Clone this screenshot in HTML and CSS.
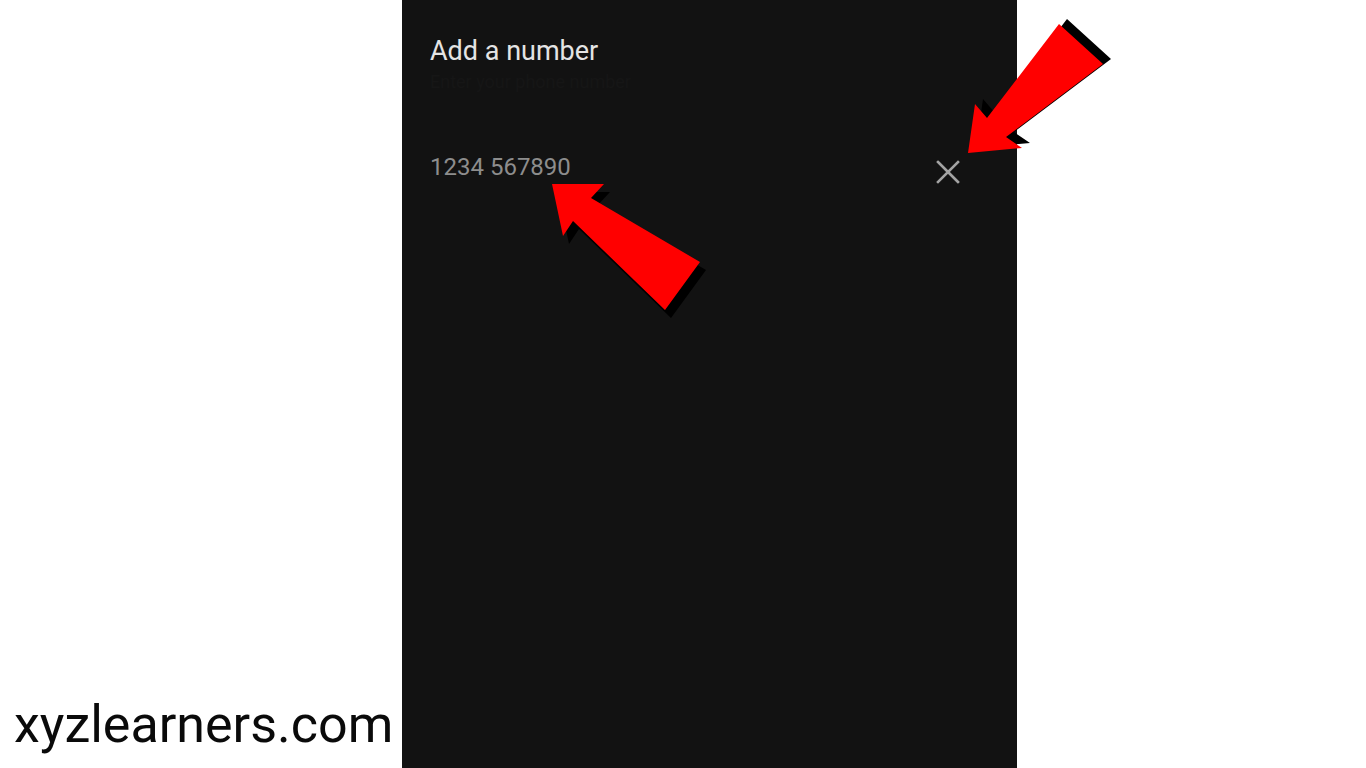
FILE: index.html
```html
<!DOCTYPE html>
<html lang="en">
<head>
<meta charset="utf-8">
<title>Add a number</title>
<link rel="stylesheet" href="styles.css">
</head>
<body>
<div class="stage">
  <aside class="side side-left">
    <div class="watermark">xyzlearners.com</div>
  </aside>
  <main class="panel">
    <h1 class="title">Add a number</h1>
    <div class="hint">Enter your phone number</div>
    <div class="field">
      <span class="number">1234 567890</span>
      <svg class="close" width="24" height="24" viewBox="0 0 24 24" aria-label="Clear">
        <path d="M2 2 L22 22 M22 2 L2 22" stroke="#a3a3a3" stroke-width="2.6" stroke-linecap="square" fill="none"/>
      </svg>
    </div>
  </main>
  <aside class="side side-right"></aside>
  <svg class="arrows" width="1366" height="768" viewBox="0 0 1366 768">
    <polygon fill="#000" points="558,192 610,192 597,206 706,270 671,318 579,229 569,244"/>
    <polygon fill="#ff0000" points="552,184 604,184 591,198 700,262 665,310 573,221 563,236"/>
    <polygon fill="#000" points="976,148 983,99 995,113 1067,19 1111,59 1014,132 1030,143"/>
    <polygon fill="#ff0000" points="968,153 975,104 987,118 1059,24 1103,64 1006,137 1022,148"/>
  </svg>
</div>
</body>
</html>
```

FILE: styles.css
```css
html, body {
  margin: 0;
  padding: 0;
  background: #ffffff;
}

.stage {
  position: relative;
  display: flex;
  width: 1366px;
  height: 768px;
  overflow: hidden;
  font-family: Roboto, "Liberation Sans", sans-serif;
}

.side {
  flex: none;
  background: #ffffff;
}

.side-left {
  width: 402px;
  display: flex;
  flex-direction: column;
  justify-content: flex-end;
  padding: 0 0 13px 14px;
  box-sizing: border-box;
}

.side-right {
  flex: 1;
}

.watermark {
  font-size: 52px;
  line-height: 60px;
  color: #0a0a0a;
  white-space: nowrap;
}

.panel {
  flex: none;
  width: 615px;
  background: #121212;
  box-sizing: border-box;
  padding: 36px 57px 0 28px;
  display: flex;
  flex-direction: column;
}

.title {
  margin: 0;
  font-size: 27px;
  font-weight: 400;
  line-height: 30px;
  color: #e4e4e4;
}

.hint {
  font-size: 18px;
  line-height: 24px;
  color: #161616;
  margin-top: 4px;
}

.field {
  margin-top: 56px;
  display: flex;
  align-items: center;
  justify-content: space-between;
}

.number {
  font-size: 24px;
  line-height: 28px;
  color: #8d8d8d;
}

.close {
  display: block;
  margin-top: 10px;
}

.arrows {
  position: absolute;
  left: 0;
  top: 0;
  pointer-events: none;
}
```
